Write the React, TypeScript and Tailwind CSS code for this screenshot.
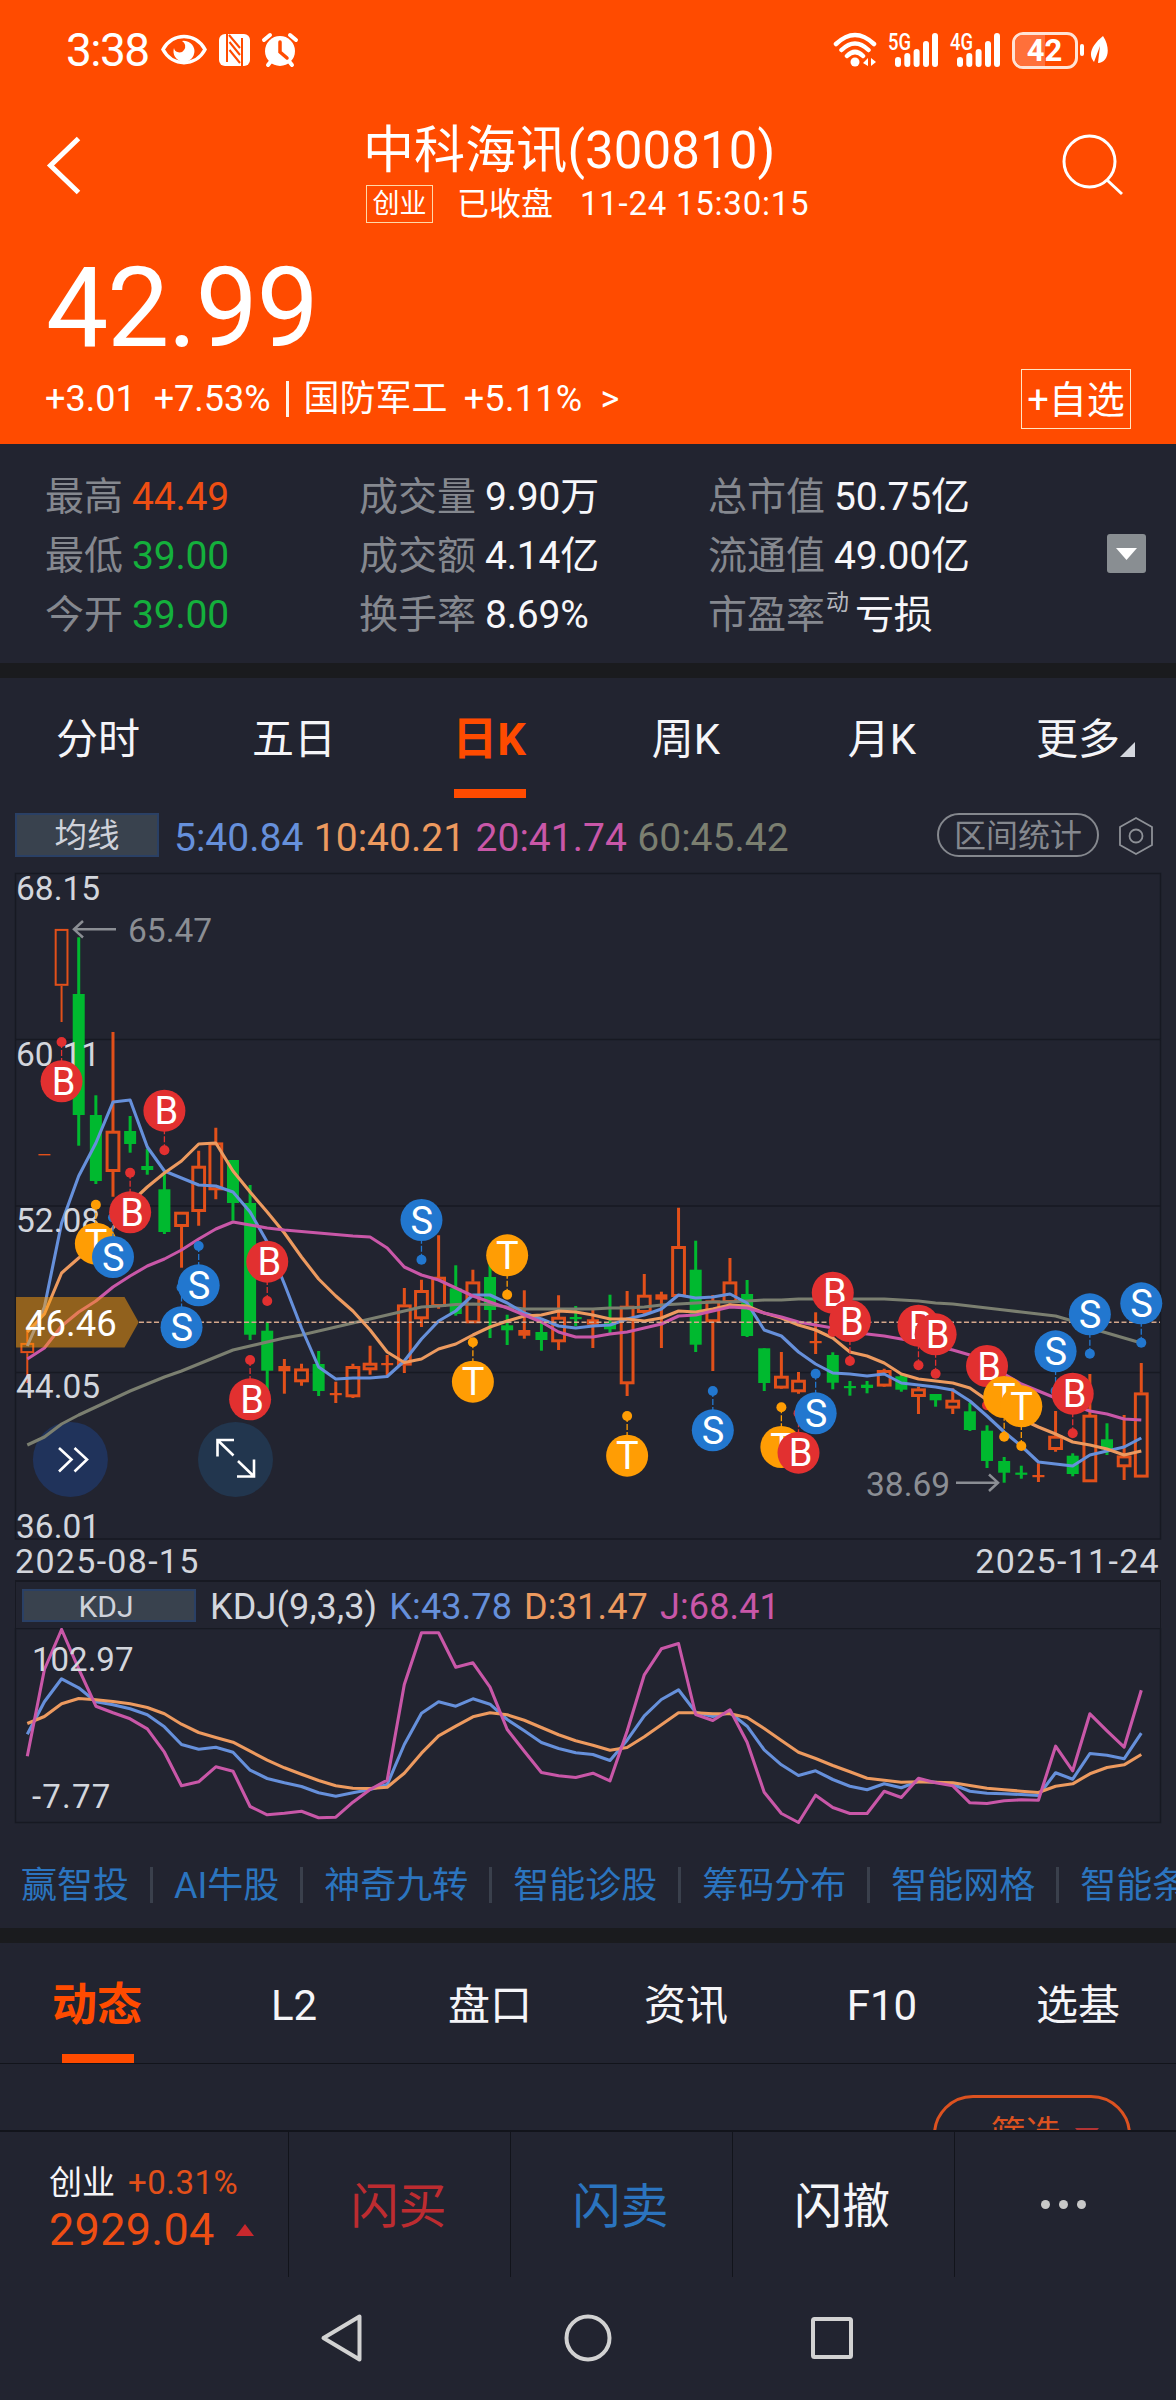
import React, { useState } from 'react';
import { clsx } from 'clsx';

type CandleKind = 'up' | 'flat' | 'down';
// [high, body top, body bottom, low, kind]
type Candle = [number, number, number, number, CandleKind];
// [index, letter, bubble y, dot y]
type Marker = [number, 'B' | 'S' | 'T', number, number];

const UP = '#e2501a';
const DOWN = '#00b92f';
const BLUE = '#6690db';
const ORANGE = '#ed9a5f';
const PINK = '#c957a8';
const OLIVE = '#7b7f70';

const xAt = (i: number) => 27.3 + i * 17.138;

const candles: Candle[] = [
  [1330, 1342.7, 1353.3, 1383, 'up'],
  [1154, 1154, 1155.4, 1155, 'flat'],
  [928.7, 928.7, 986, 1022, 'up'],
  [937.3, 994, 1115, 1145.7, 'down'],
  [1095.3, 1115, 1181, 1184, 'down'],
  [1032, 1131, 1171.7, 1196.7, 'up'],
  [1116, 1131, 1144, 1152.7, 'down'],
  [1149, 1166, 1170, 1174.7, 'down'],
  [1173, 1189.3, 1232, 1234, 'down'],
  [1212, 1212, 1226.7, 1267.7, 'up'],
  [1150.7, 1166, 1211.7, 1225.7, 'up'],
  [1127.7, 1142.7, 1190, 1199.3, 'up'],
  [1160, 1160, 1203, 1220.7, 'down'],
  [1185, 1203, 1334.7, 1340, 'down'],
  [1322, 1330.7, 1370.7, 1390, 'down'],
  [1359, 1366, 1371.3, 1393.7, 'flat'],
  [1363.7, 1368.7, 1382, 1385.7, 'up'],
  [1351, 1364, 1391, 1396, 'down'],
  [1381.7, 1393, 1395.2, 1403, 'flat'],
  [1363.7, 1366.3, 1397, 1398, 'up'],
  [1345.7, 1363, 1370, 1374.7, 'up'],
  [1355, 1363, 1365.2, 1376.7, 'flat'],
  [1288, 1304.7, 1365.3, 1373, 'up'],
  [1279.7, 1290.3, 1319, 1327, 'up'],
  [1235.3, 1277, 1306.7, 1308.7, 'up'],
  [1265.3, 1288.3, 1314, 1315.7, 'down'],
  [1269.7, 1281.7, 1323, 1323, 'up'],
  [1263, 1277, 1310, 1338, 'down'],
  [1314.7, 1325.3, 1330.3, 1345, 'down'],
  [1290.3, 1330, 1335.7, 1338.7, 'flat'],
  [1323.3, 1332, 1340, 1350.7, 'down'],
  [1295.3, 1317, 1342, 1350, 'up'],
  [1306, 1317, 1319.2, 1326, 'down'],
  [1309.7, 1319.3, 1324.7, 1348, 'flat'],
  [1294.7, 1322.3, 1329.3, 1334, 'down'],
  [1291, 1306, 1384, 1396, 'up'],
  [1274, 1295, 1312.7, 1314, 'up'],
  [1291.7, 1294.3, 1299.7, 1348, 'flat'],
  [1207.7, 1246.3, 1296.7, 1297, 'up'],
  [1240.7, 1269.7, 1344.7, 1352, 'down'],
  [1295, 1300.7, 1322, 1371, 'up'],
  [1258, 1281.7, 1302.7, 1304, 'up'],
  [1280, 1294, 1336, 1337, 'down'],
  [1348.3, 1348.3, 1383, 1391, 'down'],
  [1352, 1376, 1388.3, 1389, 'up'],
  [1372, 1380, 1392, 1393.7, 'up'],
  [1312.3, 1341, 1343.2, 1354, 'flat'],
  [1352.3, 1355, 1382.7, 1389.3, 'down'],
  [1381, 1386, 1388.2, 1395.7, 'down'],
  [1381, 1384.7, 1388, 1393.3, 'down'],
  [1368.7, 1370.3, 1386.3, 1387, 'up'],
  [1375, 1376.3, 1389.7, 1391.7, 'down'],
  [1386.7, 1388.7, 1396.7, 1414, 'up'],
  [1394, 1394, 1400.3, 1406.7, 'down'],
  [1388.3, 1400, 1408.3, 1414, 'up'],
  [1402.7, 1411.3, 1430, 1431, 'down'],
  [1425.3, 1430.7, 1461, 1468, 'down'],
  [1457, 1461, 1472.7, 1482.7, 'down'],
  [1465.7, 1472.6, 1474.8, 1478.7, 'down'],
  [1463.3, 1475, 1477.2, 1482, 'flat'],
  [1411, 1436, 1449.7, 1451.7, 'up'],
  [1453.3, 1455.7, 1474, 1476.3, 'down'],
  [1374, 1415, 1482, 1482, 'up'],
  [1423.3, 1439.3, 1449.3, 1455, 'down'],
  [1415, 1455.7, 1467, 1480, 'up'],
  [1363, 1392.7, 1477.3, 1477.3, 'up'],
];

const ma5 = [
  1346, 1307, 1223, 1176, 1143, 1102, 1100, 1147, 1171, 1178, 1185, 1186, 1192, 1212, 1242, 1284, 1328, 1367, 1379,
  1378, 1378, 1376.5, 1361, 1339, 1321, 1311, 1295, 1295, 1303, 1313, 1319, 1326, 1328, 1326, 1325, 1319, 1315, 1309,
  1295, 1298, 1297, 1294, 1303, 1330, 1336, 1352, 1364, 1373, 1374, 1376, 1374, 1383, 1385, 1387, 1390, 1401, 1416,
  1432, 1446, 1462, 1464, 1466, 1455, 1451, 1447, 1438,
];

const ma10 = [
  1332, 1314, 1273, 1258, 1245, 1228, 1203, 1187, 1173, 1161, 1144, 1143, 1171, 1192, 1212, 1233, 1257, 1279, 1296,
  1311, 1330, 1352, 1362.5, 1359, 1349, 1344, 1335, 1327, 1321, 1316, 1315, 1311, 1312, 1315, 1319, 1319, 1321, 1318,
  1311, 1312, 1309, 1305, 1306, 1313, 1318, 1325, 1330, 1338, 1352, 1356, 1363, 1374, 1379, 1381, 1383, 1388, 1400,
  1412, 1419, 1427, 1434, 1442, 1445, 1449, 1455, 1451,
];

const ma20 = [
  1359, 1348, 1326, 1312, 1301, 1287, 1276, 1266, 1259, 1250, 1239, 1229, 1222, 1225, 1228, 1230, 1231.5, 1233, 1234.5,
  1236, 1237, 1248, 1267, 1275, 1280, 1288, 1296, 1302, 1308, 1315, 1322, 1332, 1337, 1337, 1334, 1332, 1328, 1324,
  1316, 1315, 1311, 1307, 1308, 1313, 1317, 1322, 1325, 1328, 1332, 1334, 1336, 1339, 1342, 1346, 1350, 1355, 1365,
  1374, 1384, 1391, 1398, 1405, 1411, 1414, 1419, 1420,
];

const ma60 = [
  1445, 1437, 1424, 1415, 1407, 1399, 1391, 1384, 1377, 1371, 1364, 1357, 1350, 1346, 1342, 1338, 1335, 1331, 1327,
  1323, 1319, 1315, 1311, 1307, 1306, 1304.5, 1304, 1304.5, 1307, 1309, 1309, 1309, 1309, 1309, 1308, 1308, 1307, 1305,
  1304, 1303, 1302, 1302, 1301, 1300, 1300, 1299, 1299, 1299, 1299, 1299, 1299, 1300, 1301, 1303, 1304, 1306, 1308,
  1310, 1312, 1314, 1316, 1321, 1328, 1333, 1338, 1343,
];

const markers: Marker[] = [
  [2, 'B', 1081.3, 1042],
  [4, 'T', 1243.7, 1204.7],
  [5, 'S', 1257, 1217.5],
  [6, 'B', 1212.3, 1172.7],
  [8, 'B', 1110.7, 1150.3],
  [9, 'S', 1327.3, 1287.5],
  [10, 'S', 1285.3, 1246],
  [13, 'B', 1399.3, 1360],
  [14, 'B', 1261.7, 1301],
  [23, 'S', 1220, 1259.7],
  [26, 'T', 1381.7, 1342.3],
  [28, 'T', 1255.3, 1294.7],
  [35, 'T', 1455.7, 1416],
  [40, 'S', 1430.3, 1391],
  [44, 'T', 1447, 1407.3],
  [45, 'B', 1452.7, 1413.3],
  [46, 'S', 1413.3, 1373.7],
  [47, 'B', 1292.7, 1332],
  [48, 'B', 1321, 1361],
  [52, 'B', 1325.7, 1365.3],
  [53, 'B', 1334.3, 1373.7],
  [56, 'B', 1366, 1405.3],
  [57, 'T', 1397, 1436.7],
  [58, 'T', 1406.3, 1446],
  [60, 'S', 1351.3, 1391],
  [61, 'B', 1393.7, 1433.3],
  [62, 'S', 1314.3, 1353.7],
  [65, 'S', 1303.3, 1342.7],
];

const markerColor = { B: '#e23030', S: '#2277cf', T: '#ff9d04' };

const kdjK = [
  494, 397, 328, 355, 397, 406, 418, 436, 472, 525, 539, 533, 548, 602, 627, 640, 651, 670, 680, 670, 660, 645, 525,
  431, 397, 410, 388, 404, 450, 484, 519, 537, 550, 555, 573, 512, 439, 390, 361, 428, 441, 430, 470, 541, 586, 618,
  604, 630, 650, 661, 643, 655, 635, 638, 645, 665, 671, 673, 675, 678, 610, 629, 552, 557, 568, 491,
];
const kdjD = [
  462, 441, 403, 387, 391, 396, 403, 414, 433, 464, 489, 504, 518, 545, 572, 595, 614, 633, 649, 656, 657, 653, 611,
  551, 499, 470, 442, 430, 436, 452, 474, 496, 514, 527, 542, 534, 502, 466, 430, 430, 433, 433, 444, 477, 513, 548,
  567, 588, 607, 626, 632, 638, 637, 638, 640, 648, 656, 661, 665, 669, 650, 643, 613, 594, 586, 555,
];
const kdjJ = [
  560, 300, 180, 298, 410, 430, 448, 478, 548, 649, 637, 592, 605, 711, 736, 731, 725, 745, 743, 698, 660, 632, 345,
  190, 190, 293, 280, 353, 480, 545, 609, 619, 624, 611, 634, 485, 316, 238, 222, 435, 453, 421, 518, 668, 732, 759,
  677, 714, 732, 732, 665, 684, 626, 640, 649, 700, 702, 694, 691, 692, 530, 604, 433, 484, 533, 362,
];

const line = (ys: number[], f = (y: number) => y) => ys.map((y, i) => `${xAt(i).toFixed(1)},${f(y).toFixed(1)}`).join(' ');
const kdjY = (v: number) => v / 3 - 59;

function SignalBars({ label }: { label: string }) {
  return (
    <svg width="51" height="36" viewBox="0 0 51 36" fill="#fff" className="overflow-visible">
      <text x="0" y="18" fontSize="23" fontWeight="500" textLength="23" lengthAdjust="spacingAndGlyphs">{label}</text>
      <rect x="7" y="25" width="6" height="10" rx="3" />
      <rect x="16.300" y="21" width="6" height="14" rx="3" />
      <rect x="25.600" y="17" width="6" height="18" rx="3" />
      <rect x="35" y="9" width="6" height="26" rx="3" />
      <rect x="44" y="1" width="6" height="34" rx="3" />
    </svg>
  );
}

function StatusBar() {
  return (
    <div className="flex h-[100px] items-center pl-[66px] pr-[66px] text-white">
      <span className="w-[95px] text-[46px] leading-[100px] tracking-[-1.5px]">3:38</span>
      <svg width="140" height="36" viewBox="161 32 140 36" fill="none" className="shrink-0">
        <path d="M163 49.500 C172 32 196 32 205 49.500 C196 67 172 67 163 49.500 Z" stroke="#fff" strokeWidth="3.500" />
        <path d="M182 41 A10.500 10.500 0 1 1 174 48 A5.500 5.500 0 0 0 184 50 A6 6 0 0 0 182 41 Z" fill="#fff" />
        <rect x="219" y="34" width="31" height="32" rx="6" fill="#fff" />
        <path d="M227 34 V62 M229.500 42 L240 55 M229.500 50 L240 63 M229 35 L240 48 M242 38 V66" stroke="#ff4b00" strokeWidth="2" />
        <circle cx="280" cy="51" r="15" fill="#fff" />
        <path d="M264 40 L270 35 M296 40 L290 35 M268 65 L272 60 M292 65 L288 60" stroke="#fff" strokeWidth="4" strokeLinecap="round" />
        <path d="M280 42 V52 L287 58" stroke="#ff4b00" strokeWidth="3.500" strokeLinecap="round" />
      </svg>
      <div className="ml-auto flex items-center">
        <svg width="45" height="36" viewBox="0 0 45 36" fill="none" stroke="#fff" strokeWidth="4.500" strokeLinecap="round">
          <path d="M3 12 Q22 -6 41 12 M8.500 18 Q22 5 35.500 18 M14 24 Q22 16 30 24" />
          <circle cx="22" cy="30" r="4.500" fill="#fff" stroke="none" />
          <path d="M35 26 V34 L30 31 Z M38 26 V34 L43 30 Z" fill="#fff" stroke="none" />
        </svg>
        <div className="ml-[10px]"><SignalBars label="5G" /></div>
        <div className="ml-[11px]"><SignalBars label="4G" /></div>
        <div className="relative ml-[11px] flex h-[37px] w-[66px] items-center justify-center overflow-hidden rounded-[11px] border-[3px] border-[#ffe3d6]">
          <div className="absolute inset-y-0 left-0 w-[30px] bg-[#ff703a]" />
          <span className="relative pr-px text-[31px] font-bold leading-[31px]">42</span>
        </div>
        <svg width="32" height="36" viewBox="0 0 32 36" fill="#fff">
          <rect x="2" y="12" width="4" height="12" rx="2" />
          <path d="M25 4 C34 18 29 31 20 31 L22 14 L16 30 C9 22 15 12 25 4 Z" />
        </svg>
      </div>
    </div>
  );
}

function Header() {
  return (
    <header className="h-[444px] bg-[#ff4b00] text-white">
      <StatusBar />
      <div className="flex h-[138px] items-start pl-[46px] pr-[50px]">
        <svg width="38" height="62" viewBox="46 134 38 62" fill="none" stroke="#fff" strokeWidth="5" className="mt-[34px]">
          <path d="M78.500 138.500 L50.500 165.500 L78.500 192.500" />
        </svg>
        <div className="ml-[279px] flex flex-col items-start">
          <h1 className="mt-[21px] h-[60px] whitespace-nowrap text-[51px] font-normal leading-[60px] tracking-[0.1px]">中科海讯(300810)</h1>
          <div className="ml-[3px] mt-[4px] flex h-[38px] items-center whitespace-nowrap text-[32px] leading-[38px]">
            <span className="flex h-[38px] w-[67px] items-center justify-center border border-[#ffd9a8] text-[27px]">创业</span>
            <span className="ml-[24px]">已收盘</span>
            <span className="ml-[27px] text-[33px] tracking-[0.75px]">11-24 15:30:15</span>
          </div>
        </div>
        <svg width="64" height="62" viewBox="1062 134 64 62" fill="none" stroke="#fff" strokeWidth="3" className="ml-auto mt-[34px]">
          <circle cx="1089.500" cy="161.500" r="25.500" />
          <path d="M1107 180 L1122 194" />
        </svg>
      </div>
      <div className="h-[130px] pl-[46px] text-[111px] leading-[140px] tracking-[-1.5px]">42.99</div>
      <div className="flex h-[62px] items-center whitespace-nowrap pl-[45px] pr-[45px] text-[36px] leading-[62px]">
        <span>+3.01</span>
        <span className="ml-[18px]">+7.53%</span>
        <span className="mx-[15px] h-[36px] w-[3px] bg-[#fff3ea]" />
        <span>国防军工</span>
        <span className="ml-[16px] tracking-[0.3px]">+5.11%</span>
        <span className="ml-[18px]">&gt;</span>
        <button className="ml-auto flex h-[60px] w-[110px] items-center justify-center border border-[#ffe6c4] pt-px text-[38px]">
          +自选
        </button>
      </div>
    </header>
  );
}

function Stat({ label, value, tone, sup }: { label: string; value: string; tone?: string; sup?: string }) {
  return (
    <div className="flex h-[59px] items-center whitespace-nowrap text-[39px] leading-[59px]">
      <span className="text-[#85888f]">{label}</span>
      {sup ? (
        <span className="mb-[26px] ml-px mr-[6px] text-[23px] leading-[24px] text-[#b4b7be]">{sup}</span>
      ) : (
        <span className="w-[9px]" />
      )}
      <span className={clsx('tracking-[-0.2px]', tone ?? 'text-[#f7f7fa]')}>{value}</span>
    </div>
  );
}

function Stats() {
  return (
    <section className="flex h-[219px] items-start pl-[45px] pt-[24px]">
      <div className="w-[314px]">
        <Stat label="最高" value="44.49" tone="text-[#ee4e13]" />
        <Stat label="最低" value="39.00" tone="text-[#14b03c]" />
        <Stat label="今开" value="39.00" tone="text-[#14b03c]" />
      </div>
      <div className="w-[349px]">
        <Stat label="成交量" value="9.90万" />
        <Stat label="成交额" value="4.14亿" />
        <Stat label="换手率" value="8.69%" />
      </div>
      <div className="w-[399px]">
        <Stat label="总市值" value="50.75亿" />
        <Stat label="流通值" value="49.00亿" />
        <Stat label="市盈率" sup="动" value="亏损" />
      </div>
      <button className="mt-[66px] flex h-[39px] w-[39px] items-center justify-center rounded-[3px] bg-[#898e92]">
        <svg width="21" height="12" viewBox="0 0 21 12" fill="#fff">
          <path d="M0 0 H21 L10.500 12 Z" />
        </svg>
      </button>
    </section>
  );
}

type TabsProps = { items: string[]; initial: number; lineClass: string; corner?: boolean };

function Tabs({ items, initial, lineClass, corner }: TabsProps) {
  const [active, setActive] = useState(initial);
  return (
    <nav className="grid h-[120px] grid-cols-6">
      {items.map((item, i) => (
        <button
          key={item}
          onClick={() => setActive(i)}
          className={clsx(
            'relative flex h-[120px] justify-center',
            lineClass,
            i === active ? 'text-[45px] font-bold text-[#ff4b00]' : 'text-[42px] text-[#f5f5f8]'
          )}
        >
          <span className={clsx(i === active && 'pr-[2px]')}>{item}</span>
          {i === active && <span className="absolute bottom-0 left-1/2 h-[9px] w-[72px] -translate-x-1/2 bg-[#ff4b00]" />}
          {corner && i === items.length - 1 && (
            <svg width="15" height="15" viewBox="0 0 15 15" fill="#d4d7de" className="absolute bottom-[41px] right-[41px]">
              <path d="M15 0 V15 H0 Z" />
            </svg>
          )}
        </button>
      ))}
    </nav>
  );
}

function MaLegend() {
  return (
    <div className="flex h-[72px] items-start whitespace-nowrap pl-[15px] pr-[22px] pt-[15px]">
      <button className="h-[44px] w-[144px] border-2 border-[#2a4065] bg-[#39424e] text-[32.5px] leading-[42px] text-[#cfd2da]">均线</button>
      <div className="ml-[15px] flex gap-[10.5px] text-[39px] leading-[50px]">
        <span className="text-[#6690db]">5:40.84</span>
        <span className="text-[#ed9a5f]">10:40.21</span>
        <span className="text-[#c957a8]">20:41.74</span>
        <span className="text-[#7b7f70]">60:45.42</span>
      </div>
      <button className="ml-auto h-[44px] w-[162px] rounded-full border-2 border-[#85888e] text-[32px] leading-[42px] text-[#85888e]">区间统计</button>
      <svg width="36" height="40" viewBox="0 0 36 40" fill="none" stroke="#8e9197" strokeWidth="1.800" className="ml-[19px] mt-[3px]">
        <path d="M18 2 L34 11 V29 L18 38 L2 29 V11 Z" />
        <circle cx="18" cy="20" r="6.500" />
      </svg>
    </div>
  );
}

function CandleShape({ i, candle }: { i: number; candle: Candle }) {
  const [high, top, bottom, low, kind] = candle;
  const x = xAt(i);
  if (kind === 'up') {
    return (
      <g stroke={UP} strokeWidth={i < 5 ? 2 : 3} fill="none">
        <path d={`M${x} ${high} V${top} M${x} ${bottom} V${low}`} />
        <rect x={x - 5.9} y={top + 1.2} width="11.800" height={Math.max(bottom - top - 2.4, 1)} />
      </g>
    );
  }
  const fill = kind === 'down' ? DOWN : UP;
  return (
    <g fill={fill}>
      <rect x={x - 1.5} y={high} width="3" height={Math.max(low - high, 1)} />
      <rect x={x - 6} y={top} width="12" height={bottom - top} />
    </g>
  );
}

function KLineChart() {
  return (
    <svg width="1176" height="675" viewBox="0 870 1176 675" className="block">
      {/* Grid */}
      <g stroke="#171922" strokeWidth="1.500" fill="none">
        <rect x="15.500" y="873.500" width="1145" height="665.500" />
        <path d="M15 1039.500 H1161 M15 1206 H1161 M15 1372.500 H1161" />
      </g>

      {candles.map((c, i) => (
        <CandleShape key={i} i={i} candle={c} />
      ))}

      {/* Floating round controls */}
      <circle cx="70.400" cy="1459.500" r="37.500" fill="#20335b" />
      <circle cx="235.500" cy="1459.500" r="37.500" fill="#22364e" />

      {/* Moving averages */}
      <g fill="none" strokeWidth="3.100" strokeLinejoin="round">
        <polyline points={line(ma60)} stroke={OLIVE} />
        <polyline points={line(ma5)} stroke={BLUE} />
        <polyline points={line(ma10)} stroke={ORANGE} />
        <polyline points={line(ma20)} stroke={PINK} />
      </g>

      <path d="M139 1322.300 H1160" stroke="#d5a78b" strokeWidth="1.500" strokeDasharray="5 2.500" />

      {/* Price axis */}
      <g fill="#d3d6dd" fontSize="33.500">
        <text x="16" y="900">68.15</text>
        <text x="16" y="1066">60.11</text>
        <text x="16" y="1232">52.08</text>
        <text x="16" y="1398">44.05</text>
        <text x="16" y="1538">36.01</text>
      </g>

      {/* Buy / sell / T markers */}
      {markers.map(([i, letter, y, dotY]) => (
        <g key={i} fill={markerColor[letter]}>
          <path d={`M${xAt(i)} ${dotY} V${y}`} stroke={markerColor[letter]} strokeWidth="1.300" strokeDasharray="6 2" />
          <circle cx={xAt(i)} cy={dotY} r="5" />
          <circle cx={xAt(i)} cy={y} r="21" />
          <text x={xAt(i) + (letter === 'B' ? 2 : 0.3)} y={y + 13.500} fill="#fff" fontSize="38" textAnchor="middle">{letter}</text>
        </g>
      ))}

      {/* High and low callouts */}
      <g stroke="#8b8e94" strokeWidth="2.500" fill="none">
        <path d="M116 929.300 H74 M83 921 L74 929.300 L83 937.500" />
        <path d="M956 1482.700 H998 M989 1474.500 L998 1482.700 L989 1491" />
      </g>
      <g fill="#8b8e94" fontSize="33.500">
        <text x="128" y="941.500">65.47</text>
        <text x="866" y="1495.500">38.69</text>
      </g>

      {/* Cost tag */}
      <path d="M16 1297 H124.500 L138.700 1322.300 L124.500 1347.500 H16 Z" fill="#ff9d0a" fillOpacity="0.500" />
      <text x="25" y="1336" fill="#fff" fontSize="36.500">46.46</text>

      <g stroke="#fff" strokeWidth="2.600" fill="none">
        <path d="M59 1448 L71.500 1459.500 L59 1471.500 M74.500 1448 L87 1459.500 L74.500 1471.500" />
        <path d="M234 1440 H217.500 V1456.500 M217.500 1440 L233.500 1455.500 M237 1476.500 H254 V1459.500 M254 1476.500 L238 1461" />
      </g>
    </svg>
  );
}

function KdjPanel() {
  return (
    <div>
      <div className="mx-[15px] flex h-[48px] items-start whitespace-nowrap border-x border-t-2 border-[#171922] pl-[6px] pt-[7px]">
        <button className="h-[33px] w-[174px] border-2 border-[#2a4065] bg-[#39424e] pr-[6px] text-[30px] leading-[31px] text-[#cfd2da]">KDJ</button>
        <div className="ml-[14px] flex gap-[12px] text-[36px] leading-[36px] tracking-[0.15px]">
          <span className="text-[#d3d6dd]">KDJ(9,3,3)</span>
          <span className="text-[#6690db]">K:43.78</span>
          <span className="text-[#ed9a5f]">D:31.47</span>
          <span className="text-[#c957a8]">J:68.41</span>
        </div>
      </div>
      <svg width="1176" height="196" viewBox="0 0 1176 196" className="block">
        <rect x="15.500" y="0.500" width="1145" height="194" fill="none" stroke="#171922" strokeWidth="1.500" />
        <g fill="none" strokeWidth="3.100" strokeLinejoin="round" transform="translate(0 0.500)">
          <polyline points={line(kdjK, kdjY)} stroke={BLUE} />
          <polyline points={line(kdjD, kdjY)} stroke={ORANGE} />
          <polyline points={line(kdjJ, kdjY)} stroke={PINK} />
        </g>
        <g fill="#d3d6dd" fontSize="33">
          <text x="32" y="42.500">102.97</text>
          <text x="32" y="179.500" letterSpacing="1.200">-7.77</text>
        </g>
      </svg>
    </div>
  );
}

const tools = ['赢智投', 'AI牛股', '神奇九转', '智能诊股', '筹码分布', '智能网格', '智能条件'];

function ToolLinks() {
  return (
    <div className="flex h-[104px] items-center overflow-hidden whitespace-nowrap pl-[21px] pt-[17px]">
      {tools.map((tool, i) => (
        <React.Fragment key={tool}>
          {i > 0 && <span className="mx-[21px] h-[36px] w-[3px] shrink-0 bg-[#3a404c]" />}
          <span className="pt-[2px] text-[36px] leading-[48px] text-[#2b74bf]">{tool}</span>
        </React.Fragment>
      ))}
    </div>
  );
}

function BottomBar() {
  return (
    <div className="flex h-[147px] whitespace-nowrap border-t-2 border-[#12141b]">
      <div className="w-[288px] pl-[49px] pt-[30px]">
        <div className="flex h-[42px] items-center text-[33px] leading-[42px]">
          <span className="text-[#f5f5f8]">创业</span>
          <span className="ml-[13px] tracking-[0.5px] text-[#e2501a]">+0.31%</span>
        </div>
        <div className="flex h-[51px] items-center">
          <span className="text-[45px] leading-[51px] tracking-[0.3px] text-[#ee4e13]">2929.04</span>
          <svg width="18" height="12" viewBox="0 0 18 12" fill="#c9282d" className="ml-[21px]">
            <path d="M9 0 L18 12 H0 Z" />
          </svg>
        </div>
      </div>
      <button className="w-[222px] border-l border-[#12141b] pr-[2px] pt-[4px] text-[48px] text-[#bd2c30]">闪买</button>
      <button className="w-[222px] border-l border-[#12141b] pr-[2px] pt-[4px] text-[48px] text-[#2b74bf]">闪卖</button>
      <button className="w-[222px] border-l border-[#12141b] pr-[3px] pt-[4px] text-[48px] text-[#f5f5f8]">闪撤</button>
      <button className="flex flex-1 items-center justify-center gap-[9px] border-l border-[#12141b] pr-1">
        <span className="h-[9px] w-[9px] rounded-full bg-[#c8c8c8]" />
        <span className="h-[9px] w-[9px] rounded-full bg-[#c8c8c8]" />
        <span className="h-[9px] w-[9px] rounded-full bg-[#c8c8c8]" />
      </button>
    </div>
  );
}

function SystemNav() {
  return (
    <div className="flex h-[122px] items-center justify-between pl-[318px] pr-[321px]">
      <svg width="48" height="52" viewBox="318 2313 48 52" fill="none" stroke="#d2d2d2" strokeWidth="4" strokeLinejoin="round">
        <path d="M323.500 2339 L359.500 2317.500 V2360.500 Z" />
      </svg>
      <svg width="48" height="48" viewBox="0 0 48 48" fill="none" stroke="#d2d2d2" strokeWidth="4">
        <circle cx="24" cy="24" r="21.500" />
      </svg>
      <svg width="46" height="46" viewBox="0 0 46 46" fill="none" stroke="#d2d2d2" strokeWidth="4">
        <rect x="4" y="4" width="38" height="38" rx="1.500" />
      </svg>
    </div>
  );
}

export default function App() {
  return (
    <div className="flex h-[2400px] w-[1176px] flex-col overflow-hidden bg-[#222430] font-['Roboto','Noto_Sans_CJK_SC',sans-serif]">
      <Header />
      <Stats />
      <div className="h-[15px] bg-[#1a1b1e]" />

      <Tabs items={['分时', '五日', '日K', '周K', '月K', '更多']} initial={2} lineClass="leading-[123px]" corner />
      <MaLegend />
      <KLineChart />
      <div className="flex h-[35px] justify-between pl-[15px] pr-[16px] text-[34px] leading-[33px] tracking-[1.3px] text-[#d3d6dd]">
        <span>2025-08-15</span>
        <span>2025-11-24</span>
      </div>
      <KdjPanel />
      <ToolLinks />
      <div className="h-[15px] bg-[#1a1b1e]" />

      <Tabs items={['动态', 'L2', '盘口', '资讯', 'F10', '选基']} initial={0} lineClass="leading-[125px]" />
      <div className="flex h-[67px] items-start justify-end overflow-hidden border-t border-[#12141b] pr-[45px] pt-[31px]">
        <button className="flex h-[80px] w-[198px] shrink-0 items-center justify-center gap-[14px] rounded-full border-[3px] border-[#dc5220] pl-[25px] text-[35px] text-[#dc5220]">
          筛选
          <svg width="24" height="14" viewBox="0 0 24 14" fill="#b23434">
            <path d="M0 0 H24 L12 14 Z" />
          </svg>
        </button>
      </div>
      <BottomBar />
      <SystemNav />
    </div>
  );
}
